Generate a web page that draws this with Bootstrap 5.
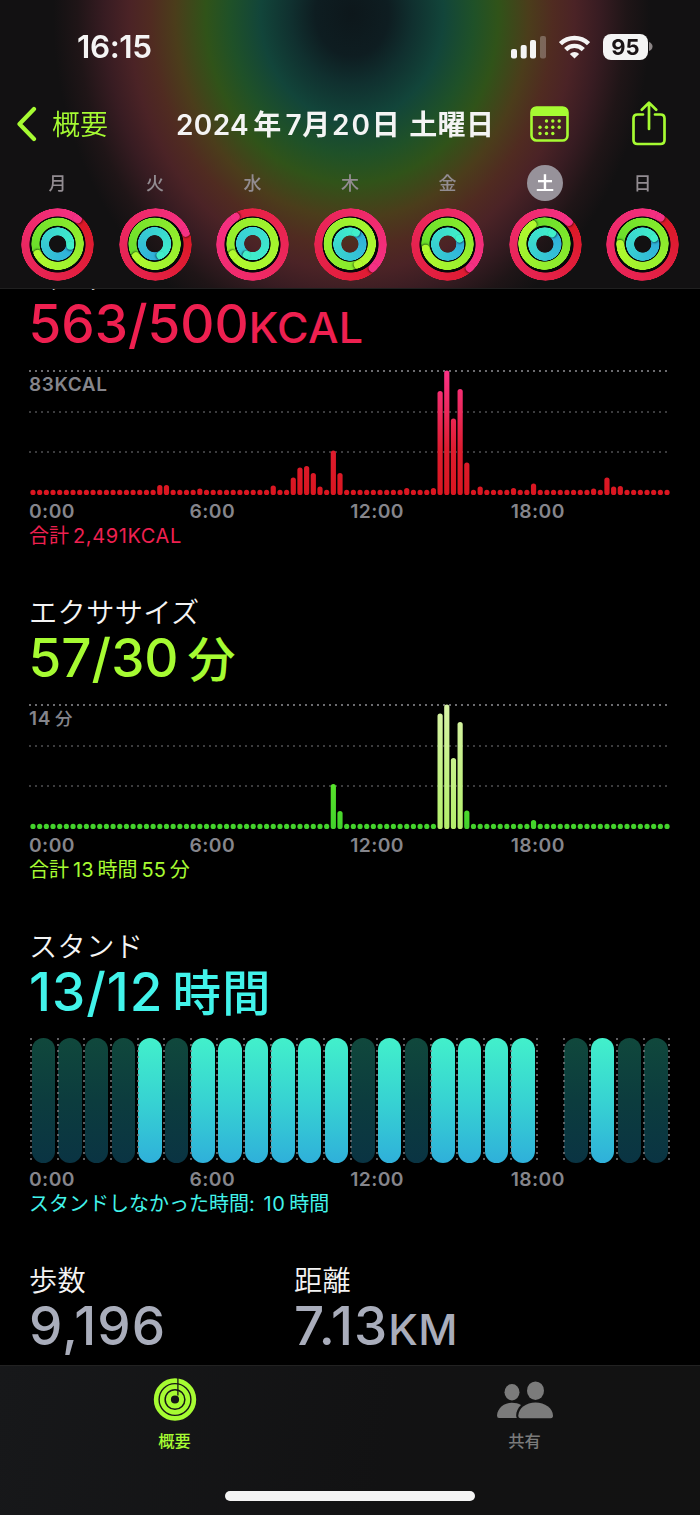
<!DOCTYPE html>
<html lang="ja" data-bs-theme="dark">
<head>
<meta charset="utf-8">
<meta name="viewport" content="width=device-width, initial-scale=1">
<title>アクティビティ</title>
<link href="https://cdn.jsdelivr.net/npm/bootstrap@5.3.0/dist/css/bootstrap.min.css" rel="stylesheet">
<style>
  :root { --lime:#a6fb32; --move:#ee2050; --stand:#42f3ea; --muted:#85858b; }
  body { background:#000; color:#f4f4f4; font-family:Inter,"Noto Sans CJK JP",sans-serif; width:700px; height:1515px; overflow:hidden; }
  svg { display:block; flex:none; }

  /* header */
  .top-bar { height:289px; border-bottom:1px solid #202020;
    background:radial-gradient(ellipse 305px 352px at 352px 14px,#0d171b 0,#0e1d21 12%,#10302f 20%,#12453a 30%,#1f5128 40%,#305319 48%,#4b3d1b 58%,#502b21 66%,#4b2326 73%,#381c22 81%,#1f1517 90%,#121112 98%); }
  .status-row { height:93px; padding:0 52px 0 77px; }
  .clock { font-size:31.5px; font-weight:600; letter-spacing:-.4px; line-height:1; }
  .battery { width:45px; height:26px; border-radius:8px; background:#f4f4f4; color:#1a1416; font-size:22px; font-weight:700; line-height:26px; }
  .nav-row { height:62px; padding:0 33px 0 17px; color:var(--lime); }
  .back-label { width:123px; margin-left:15px; font-size:28px; font-weight:350; line-height:1; padding-top:1px; }
  .title-text { width:354px; margin-left:1px; font-size:28px; font-weight:600; color:#f4f4f4; line-height:1; letter-spacing:.4px; padding-top:1px; }
  .month-day { letter-spacing:1.9px; }
  .gap-r { margin-right:4px; } .gap-l { margin-left:4px; }
  .week { padding:10px 8.75px 0; }
  .day-name { width:36px; height:36px; line-height:37px; font-size:18px; font-weight:500; color:#928c91; text-align:center; }
  .day-name.today { background:#97929a; color:#fff; font-weight:700; }
  .rings { position:relative; width:73px; height:73px; margin-top:6.5px;
    background:radial-gradient(circle,transparent 15px,#06080a 16px,#06080a 29px,transparent 30px); border-radius:50%; }
  .arc { position:absolute; inset:var(--in); border-radius:50%; transform:rotate(var(--a));
    background:conic-gradient(var(--c0),var(--c1));
    -webkit-mask:radial-gradient(closest-side,transparent calc(100% - 8.8px),#000 calc(100% - 8.1px),#000 calc(100% - .6px),transparent 100%);
            mask:radial-gradient(closest-side,transparent calc(100% - 8.8px),#000 calc(100% - 8.1px),#000 calc(100% - .6px),transparent 100%); }
  .arc::after { content:""; position:absolute; top:0; left:calc(50% - 4.2px); width:8.4px; height:8.4px; border-radius:50%; background:var(--c1); box-shadow:1px 0 2px rgba(0,0,0,.55); }

  /* metric sections */
  main { padding:261px 30px 0 30px; }
  .metric { height:334px; }
  .metric-label { height:34px; line-height:37px; font-size:28.2px; font-weight:350; margin-left:-1px; letter-spacing:.4px; }
  .metric-value { height:60px; line-height:58px; font-size:53px; font-weight:500; white-space:nowrap; margin-left:-1.500px; }
  .metric-value .unit { font-size:43px; letter-spacing:.3px; font-weight:550; }
  .metric-value .kanji { font-size:48px; line-height:1; margin-left:9px; letter-spacing:1px; }
  .metric-value.wide { letter-spacing:1px; margin-left:-1px; }
  .metric-value.wide .kanji { font-size:48.500px; }
  .c-move { color:var(--move); } .c-ex { color:var(--lime); } .c-stand { color:var(--stand); } .c-gray { color:#a9adbb; }
  .chart { position:relative; height:125px; margin-top:15px; }
  .grid-dots { position:absolute; left:-1px; right:-1px; height:2px; background:radial-gradient(circle at 1px 1px,#77777b .8px,transparent 1.1px) 0 0/6px 2px repeat-x; opacity:.5; }
  .grid-dots.g0 { top:0; opacity:.9; } .grid-dots.g1 { top:41px; } .grid-dots.g2 { top:81px; }
  .peak { position:absolute; left:-1px; top:4px; font-size:19px; line-height:22px; font-weight:600; color:var(--muted); letter-spacing:.6px; }
  .peak .gap-l { font-size:17.5px; font-weight:500; }
  .bars { position:relative; width:640px; height:125px; }
  .hours { margin-left:0; margin-right:.5px; }
  .hour { position:relative; }
  .hour::before, .hour:last-child::after { content:""; position:absolute; top:0; bottom:0; left:0; width:2px; background:radial-gradient(circle at 1px 1px,#77777b .7px,transparent 1.1px) 0 0/2px 6px repeat-y; opacity:.8; }
  .hour:last-child::after { left:auto; right:-1px; }
  .pill { width:23.4px; height:125px; border-radius:12px; }
  .pill.on { background:linear-gradient(#42f0cb,#37d3d2 50%,#2fb0da); }
  .pill.off { background:linear-gradient(#10483c,#0c3c3e 50%,#0a3443); }
  .axis { height:24px; margin-top:4px; font-size:19.3px; line-height:25px; font-weight:600; color:var(--muted); letter-spacing:.4px; }
  .axis span { width:160.6px; flex:none; margin-left:-.5px; margin-right:.5px; }
  .axis { overflow:hidden; margin-left:-1px; padding-left:.5px; }
  .total { font-size:20px; line-height:27px; font-weight:400; margin-left:-1px; white-space:nowrap; }
  .total .amount { letter-spacing:.6px; }

  /* tab bar */
  .tabs { height:150px; border-top:1px solid #222; background:linear-gradient(100deg,#17181a,#121213 55%,#121212); }
  .tab-item { width:349px; font-size:16.3px; font-weight:500; line-height:24px; padding-top:11px; }
  .tab-item + .tab-item { width:351px; }
  .home-pill { position:absolute; left:225px; bottom:14px; width:250px; height:10px; border-radius:5px; background:#f4f4f4; }
</style>
</head>
<body>

<header class="top-bar fixed-top">
  <div class="status-row d-flex align-items-center">
    <span class="clock me-auto">16:15</span>
    <svg width="36" height="24" viewBox="0 0 36 24" fill="#f4f4f4"><rect x="0" y="14" width="6" height="9.5" rx="2"/><rect x="9.700" y="10" width="6" height="13.500" rx="2"/><rect x="19" y="5" width="6" height="18.500" rx="2"/><rect x="29" y="1" width="6" height="22.500" rx="2" opacity=".28"/></svg>
    <svg width="31" height="24" viewBox="0 0 31 24" fill="none" stroke="#f4f4f4" stroke-width="4.400" style="margin:0 13px 0 12px"><path d="M1.500 8.700a20 20 0 0 1 28 0"/><path d="M6.700 14.600a12.300 12.300 0 0 1 17.600 0"/><path d="M15.500 23.600l-4.700-4.700a6.800 6.800 0 0 1 9.400 0z" fill="#f4f4f4" stroke="none"/></svg>
    <span class="battery text-center">95</span>
    <svg width="4" height="9" viewBox="0 0 4 9" style="margin:0 -5px 0 1px"><path d="M0 0q3.500 1.500 3.500 4.500T0 9z" fill="#8b8586"/></svg>
  </div>
  <div class="nav-row d-flex align-items-center">
    <svg width="20" height="36" viewBox="0 0 20 36"><path d="M17 3L2.500 18 17 33" fill="none" stroke="currentColor" stroke-width="4.200" stroke-linecap="round" stroke-linejoin="round"/></svg>
    <span class="back-label">概要</span>
    <span class="title-text text-nowrap"><span class="gap-r">2024</span>年<span class="gap-l">7</span><span class="month-day">月20日</span> 土曜日</span>
    <svg width="39" height="36" viewBox="0 0 39 36"><rect x="1.500" y="1.500" width="36" height="33" rx="5" fill="none" stroke="currentColor" stroke-width="2.600"/><path d="M1 10V6q0-5 5-5h27q5 0 5 5v4z" fill="currentColor"/><g fill="currentColor"><circle cx="16.500" cy="15" r="1.700"/><circle cx="22.800" cy="15" r="1.700"/><circle cx="29.200" cy="15" r="1.700"/><circle cx="10" cy="21.200" r="1.700"/><circle cx="16.500" cy="21.200" r="1.700"/><circle cx="22.800" cy="21.200" r="1.700"/><circle cx="29.200" cy="21.200" r="1.700"/><circle cx="10" cy="27.500" r="1.700"/><circle cx="16.500" cy="27.500" r="1.700"/><circle cx="22.800" cy="27.500" r="1.700"/></g></svg>
    <svg class="ms-auto" width="36" height="46" viewBox="0 0 36 46" fill="none" stroke="currentColor" stroke-width="2.700" stroke-linecap="round" stroke-linejoin="round"><path d="M12 13.500H6.500q-4 0-4 4v21.500q0 4 4 4h23q4 0 4-4V17.500q0-4-4-4H24"/><path d="M18 28V1.800M10.800 8.800L18 1.600l7.200 7.200"/></svg>
  </div>
  <div class="week d-flex" id="week"></div>
</header>

<main>
  <section class="metric">
    <div class="metric-label">ムーブ</div>
    <div class="metric-value c-move">563/500<span class="unit">KCAL</span></div>
    <div class="chart">
      <div class="grid-dots g0"></div><div class="grid-dots g1"></div><div class="grid-dots g2"></div>
      <div class="peak">83KCAL</div>
      <svg class="bars" id="move" viewBox="0 0 640 125">
        <linearGradient id="moveFill" gradientUnits="userSpaceOnUse" x1="0" y1="125" x2="0" y2="0"><stop offset="0" stop-color="#da1620"/><stop offset=".35" stop-color="#dd1c2d"/><stop offset=".7" stop-color="#ee2a60"/><stop offset="1" stop-color="#fb3186"/></linearGradient>
      </svg>
    </div>
    <div class="axis d-flex"><span>0:00</span><span>6:00</span><span>12:00</span><span>18:00</span></div>
    <div class="total c-move"><span class="gap-r">合計</span><span class="amount">2,491KCAL</span></div>
  </section>

  <section class="metric">
    <div class="metric-label">エクササイズ</div>
    <div class="metric-value c-ex">57/30<span class="kanji">分</span></div>
    <div class="chart">
      <div class="grid-dots g0"></div><div class="grid-dots g1"></div><div class="grid-dots g2"></div>
      <div class="peak">14<span class="gap-l">分</span></div>
      <svg class="bars" id="exercise" viewBox="0 0 640 125">
        <linearGradient id="lowFill" gradientUnits="userSpaceOnUse" x1="0" y1="125" x2="0" y2="80"><stop offset="0" stop-color="#42d22c"/><stop offset="1" stop-color="#58e32b"/></linearGradient>
        <linearGradient id="highFill" gradientUnits="userSpaceOnUse" x1="0" y1="125" x2="0" y2="0"><stop offset="0" stop-color="#b3ef6b"/><stop offset="1" stop-color="#d8f3a6"/></linearGradient>
      </svg>
    </div>
    <div class="axis d-flex"><span>0:00</span><span>6:00</span><span>12:00</span><span>18:00</span></div>
    <div class="total c-ex"><span class="gap-r">合計</span>13<span class="gap-l gap-r">時間</span>55<span class="gap-l">分</span></div>
  </section>

  <section class="metric">
    <div class="metric-label">スタンド</div>
    <div class="metric-value c-stand wide">13/12<span class="kanji">時間</span></div>
    <div class="chart hours d-flex" id="stand"></div>
    <div class="axis d-flex"><span>0:00</span><span>6:00</span><span>12:00</span><span>18:00</span></div>
    <div class="total c-stand">スタンドしなかった時間: <span class="amount" style="margin-left:3px">10</span><span class="gap-l">時間</span></div>
  </section>

  <section class="d-flex">
    <div style="width:264px"><div class="metric-label">歩数</div><div class="metric-value c-gray wide">9,196</div></div>
    <div><div class="metric-label ms-0">距離</div><div class="metric-value c-gray wide ms-0">7.13<span class="unit">KM</span></div></div>
  </section>
</main>

<footer class="tabs fixed-bottom d-flex">
  <div class="tab-item d-flex flex-column align-items-center c-ex">
    <svg width="44" height="44" viewBox="0 0 44 44" fill="none" stroke="currentColor"><circle cx="22" cy="22.500" r="18.900" stroke-width="4.600"/><circle cx="22" cy="22.500" r="12.900" stroke-width="4.600"/><circle cx="22" cy="22.500" r="6.600" stroke-width="5"/><path d="M24.900 0v18.500" stroke="#151617" stroke-width="1.300"/></svg>
    <span class="mt-2">概要</span>
  </div>
  <div class="tab-item d-flex flex-column align-items-center" style="color:#7b7b7b">
    <svg width="58" height="44" viewBox="0 0 58 44" fill="currentColor"><ellipse cx="16" cy="15.200" rx="7.500" ry="8.200"/><path d="M3 41q-2 0-2-2.500C1.500 31 8 25.700 16 25.700c3.500 0 6.500.8 9 2.200C21.800 31 20 35 20.200 38.800q0 1.400.7 2.200z"/><ellipse cx="39.500" cy="13.700" rx="8.500" ry="9.300"/><path d="M24.500 41.200q-2.200 0-2.200-2.700C22.800 31 30 25.500 39.500 25.500S56.500 31 57 38.500q0 2.700-2.200 2.700z"/></svg>
    <span class="mt-2">共有</span>
  </div>
  <div class="home-pill"></div>
</footer>

<script src="https://cdn.jsdelivr.net/npm/bootstrap@5.3.0/dist/js/bootstrap.bundle.min.js"></script>
<script>
  // [name, move, exercise, stand] as head angles, then optional colours where each lap begins
  const days = [
    ['月', 38, 242, 98], ['火', 68, 235, 153],
    ['水', 328, 241, 208, '#e6203f', '#90ec2c', '#36c8d8'],
    ['木', 136, 158, 28, '#df1b30', '#86ea2c'], ['金', 136, 256, 65, '#df1b30'],
    ['土', 45, 327, 34], ['日', 33, 268, 62]
  ];
  const arc = (inset, a, c0, c1) => `<div class="arc" style="--in:${inset}px;--a:${a}deg;--c0:${c0};--c1:${c1}"></div>`;
  document.getElementById('week').innerHTML = days.map(([n, m, e, s, cm = '#da1824', ce = '#68de2b', cs = '#2eabdb']) =>
    `<div class="col d-flex flex-column align-items-center"><div class="day-name rounded-circle${n === '土' ? ' today' : ''}">${n}</div>
     <div class="rings">${arc(0, m, cm, '#f53084')}${arc(9.9, e, ce, '#b2f92f')}${arc(19.7, s, cs, '#40efc9')}</div></div>`).join('');

  // quarter-hour bars: heights in px for the slots that rise above the base dot
  const fill = (id, colour, data) => {
    document.getElementById(id).insertAdjacentHTML('beforeend', Array.from({ length: 96 }, (_, i) => {
      const h = data[i] || 5.2;
      return `<rect x="${(0.4 + i * 6.674).toFixed(2)}" y="${125 - h}" width="5.2" height="${h}" rx="2.6" fill="url(#${colour(h)})"/>`;
    }).join(''));
  };
  fill('move', () => 'moveFill', {19:10,20:10,25:6.5,36:9.5,39:17.5,40:27.5,41:29,42:22,43:8.5,45:44.5,46:22,56:7,60:7,61:104,62:124.5,63:76.5,64:106,65:32.5,67:8.5,72:7,75:11.5,84:6.5,86:17.5,87:8.5,88:9});
  fill('exercise', h => h > 60 ? 'highFill' : 'lowFill', {45:45,46:18,61:115.5,62:124.5,63:71,64:107,65:18.5,75:9});

  document.getElementById('stand').innerHTML = [...'000010111111010111' + '1-0100'].map(c =>
    `<div class="hour col d-flex justify-content-center">${c === '-' ? '' : `<div class="pill ${c === '1' ? 'on' : 'off'}"></div>`}</div>`).join('');
</script>
</body>
</html>
